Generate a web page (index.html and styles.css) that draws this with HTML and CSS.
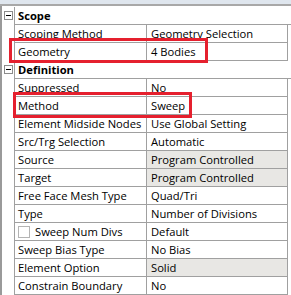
FILE: index.html
```html
<!DOCTYPE html>
<html>
<head>
<meta charset="utf-8">
<link rel="stylesheet" href="styles.css">
</head>
<body>
<div class="panel">
  <div class="topbar"></div>
  <div class="grid">
    <div class="row group first"><div class="exp"><span class="minus"></span></div><div class="gname">Scope</div></div>
    <div class="row"><div class="exp"></div><div class="name">Scoping Method</div><div class="val">Geometry Selection</div></div>
    <div class="row"><div class="exp"></div><div class="name">Geometry</div><div class="val">4 Bodies</div></div>
    <div class="row group"><div class="exp"><span class="minus"></span></div><div class="gname">Definition</div></div>
    <div class="row"><div class="exp"></div><div class="name">Suppressed</div><div class="val">No</div></div>
    <div class="row"><div class="exp"></div><div class="name">Method</div><div class="val">Sweep</div></div>
    <div class="row"><div class="exp"></div><div class="name">Element Midside Nodes</div><div class="val">Use Global Setting</div></div>
    <div class="row"><div class="exp"></div><div class="name">Src/Trg Selection</div><div class="val">Automatic</div></div>
    <div class="row"><div class="exp"></div><div class="name">Source</div><div class="val ro">Program Controlled</div></div>
    <div class="row"><div class="exp"></div><div class="name">Target</div><div class="val ro">Program Controlled</div></div>
    <div class="row"><div class="exp"></div><div class="name">Free Face Mesh Type</div><div class="val">Quad/Tri</div></div>
    <div class="row"><div class="exp"></div><div class="name">Type</div><div class="val">Number of Divisions</div></div>
    <div class="row"><div class="exp"></div><div class="name"><span class="check"></span>Sweep Num Divs</div><div class="val">Default</div></div>
    <div class="row"><div class="exp"></div><div class="name">Sweep Bias Type</div><div class="val">No Bias</div></div>
    <div class="row"><div class="exp"></div><div class="name">Element Option</div><div class="val ro">Solid</div></div>
    <div class="row"><div class="exp"></div><div class="name">Constrain Boundary</div><div class="val">No</div></div>
  </div>
  <div class="mark mark-geo"></div>
  <div class="mark mark-method"></div>
</div>
</body>
</html>
```
FILE: styles.css
```css
html, body {
  margin: 0;
  padding: 0;
  background: #ffffff;
  overflow: hidden;
}
.panel {
  position: relative;
  width: 291px;
  height: 295px;
  font-family: "Open Sans", "Noto Sans", sans-serif;
  font-size: 11.2px;
  color: #000;
}
.topbar {
  height: 4px;
  background: #dfe6ee;
  border-bottom: 2px solid #a8a8a8;
}
.grid {
  border-left: 2px solid #9a9a9a;
  padding-top: 1px;
}
.row {
  display: flex;
  height: 18px;
}
.exp {
  width: 12px;
  flex: none;
  position: relative;
}
.minus {
  position: absolute;
  left: 2px;
  top: 4px;
  width: 7px;
  height: 7px;
  border: 1px solid #8c8c8c;
  background: #fff;
}
.minus::after {
  content: "";
  position: absolute;
  left: 1px;
  top: 3px;
  width: 5px;
  height: 1px;
  background: #000;
}
.name, .val, .gname {
  box-sizing: border-box;
  height: 18px;
  border-left: 1px solid #a0a0a0;
  border-bottom: 1px solid #a0a0a0;
  display: flex;
  align-items: center;
  white-space: nowrap;
  overflow: hidden;
}
.name {
  width: 132px;
  padding-left: 3px;
}
.val {
  width: 142px;
  padding-left: 4px;
  border-right: 1px solid #a0a0a0;
}
.gname {
  flex: 1;
  padding-left: 3px;
  font-weight: bold;
}
.ro {
  background: #e8e7e4;
}
.check {
  width: 10px;
  height: 10px;
  border: 1px solid #b4b4b4;
  background: #fff;
  margin-right: 5px;
  flex: none;
}
.mark {
  position: absolute;
  border: 3px solid #e5202e;
  box-sizing: border-box;
}
.mark-geo {
  left: 9px;
  top: 38px;
  width: 199px;
  height: 25px;
}
.mark-method {
  left: 13px;
  top: 92px;
  width: 179px;
  height: 26px;
}
```
